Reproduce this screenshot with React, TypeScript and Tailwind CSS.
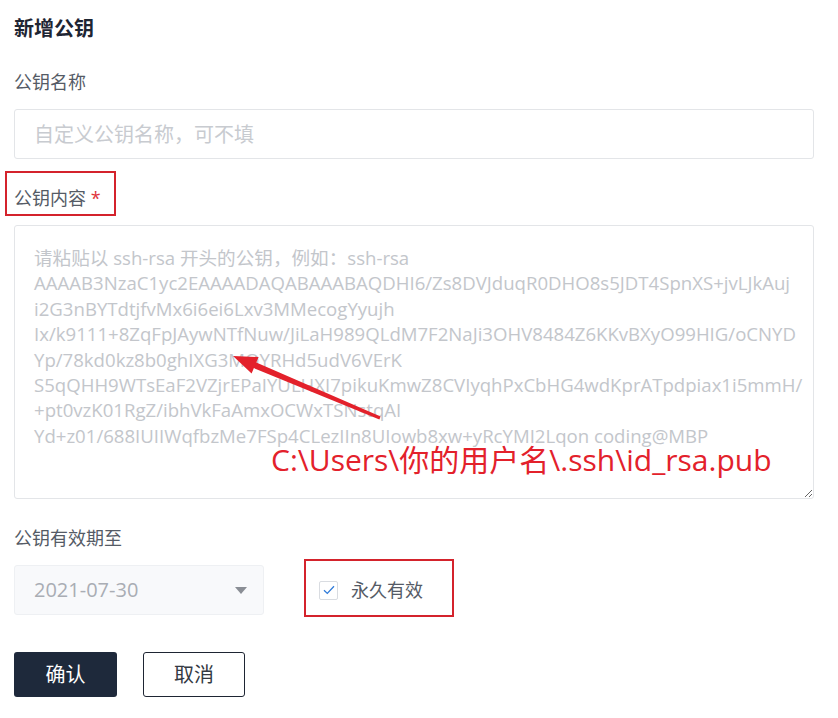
import { useState } from "react";

const font = "font-['Open_Sans','Noto_Sans_CJK_SC',sans-serif]";

const keyHint = [
  "请粘贴以 ssh-rsa 开头的公钥，例如：ssh-rsa",
  "AAAAB3NzaC1yc2EAAAADAQABAAABAQDHI6/Zs8DVJduqR0DHO8s5JDT4SpnXS+jvLJkAuj",
  "i2G3nBYTdtjfvMx6i6ei6Lxv3MMecogYyujh",
  "Ix/k9111+8ZqFpJAywNTfNuw/JiLaH989QLdM7F2NaJi3OHV8484Z6KKvBXyO99HIG/oCNYD",
  "Yp/78kd0kz8b0ghIXG3MOYRHd5udV6VErK",
  "S5qQHH9WTsEaF2VZjrEPaIYULHXI7pikuKmwZ8CVIyqhPxCbHG4wdKprATpdpiax1i5mmH/",
  "+pt0vzK01RgZ/ibhVkFaAmxOCWxTSNstqAI",
  "Yd+z01/688IUIIWqfbzMe7FSp4CLezIIn8UIowb8xw+yRcYMI2Lqon coding@MBP",
].join("\n");

export default function App() {
  const [forever, setForever] = useState(true);

  return (
    <div className={`relative w-[838px] h-[718px] bg-white pl-[14px] pt-[17px] ${font}`}>
      {/* Title */}
      <h1 className="h-6 text-[20px] leading-6 font-bold text-[#1e2533]">新增公钥</h1>

      {/* Name */}
      <div className="mt-[29px] text-[18px] leading-6 text-[#555b66]">公钥名称</div>
      <input
        className={`mt-[15px] block w-[800px] h-[50px] rounded-[3px] border border-[#e3e5e8] px-[19px] text-[20px] outline-none placeholder:text-[#c8cbd0] ${font}`}
        placeholder="自定义公钥名称，可不填"
      />

      {/* Content label with annotation box */}
      <div className="mt-[12px] -ml-[9px] w-[111px] h-[45px] border-2 border-[#d4232c] pl-[7px] pt-[13px] text-[18px] leading-6 text-[#555b66]">
        公钥内容 <span className="text-[#e0333b]">*</span>
      </div>
      <textarea
        className={`mt-[9px] block w-[800px] h-[274px] rounded-[3px] border border-[#e3e5e8] pl-[19px] pr-[2px] pt-[19px] text-[18.6px] leading-[25.4px] outline-none placeholder:text-[#c3c6cb] ${font}`}
        placeholder={keyHint}
      />

      {/* Expire */}
      <div className="mt-[27px] text-[18px] leading-6 text-[#555b66]">公钥有效期至</div>
      <div className="mt-[15px] flex items-start">
        <div className="flex w-[250px] h-[50px] items-center justify-between rounded-[3px] border border-[#eef0f3] bg-[#f8f9fb] pl-[19px] pr-[16px]">
          <span className="text-[20px] text-[#a9adb4]">2021-07-30</span>
          <svg width="12" height="7" viewBox="0 0 12 7">
            <path d="M0 0 H12 L6 7 Z" fill="#8a8e95" />
          </svg>
        </div>
        <label className="ml-[40px] -mt-[6px] -mb-[2px] flex w-[150px] h-[58px] items-center border-2 border-[#d4232c] pl-[13px] pt-[4px] cursor-pointer">
          <span
            onClick={() => setForever(v => !v)}
            className="flex w-[19px] h-[19px] items-center justify-center rounded-[2px] border border-[#d9dce1] bg-white"
          >
            {forever && (
              <svg width="12" height="10" viewBox="0 0 12 10">
                <path d="M1 5.2 L4.3 8.4 L11 1.2" fill="none" stroke="#2f7bd9" strokeWidth="1.3" />
              </svg>
            )}
          </span>
          <span className="ml-[13px] text-[18px] text-[#555b66]">永久有效</span>
        </label>
      </div>

      {/* Buttons */}
      <div className="mt-[37px] flex gap-[26px]">
        <button className="w-[103px] h-[45px] rounded-[3px] bg-[#1e293b] text-[20px] text-white">确认</button>
        <button className="w-[102px] h-[45px] rounded-[3px] border border-[#1e2533] bg-white text-[20px] text-[#333942]">取消</button>
      </div>

      {/* Annotation arrow */}
      <svg className="pointer-events-none absolute left-0 top-0" width="838" height="718" viewBox="0 0 838 718">
        <polygon
          points="380.6,416.6 256.3,362.5 258.6,357 233,356 251.6,373.6 253.9,368.1 379.4,419.4"
          fill="#e3212b"
        />
      </svg>
      <div className="pointer-events-none absolute left-[271px] top-[442px] whitespace-nowrap text-[30px] leading-[36px] text-[#e3212b]">
        C:\Users\你的用户名\.ssh\id_rsa.pub
      </div>
    </div>
  );
}
